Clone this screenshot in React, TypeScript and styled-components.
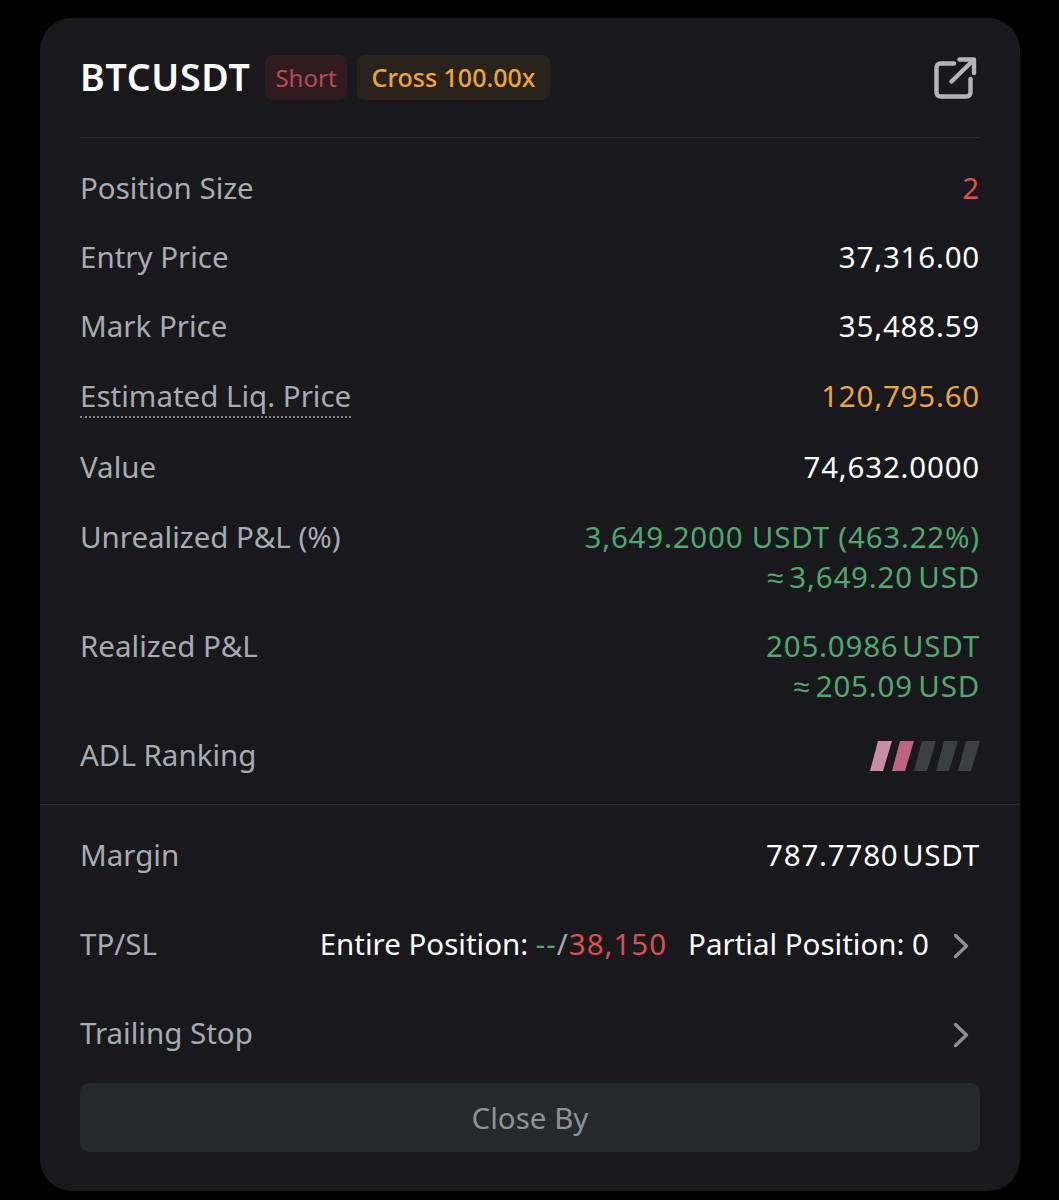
import React from "react";
import styled, { createGlobalStyle } from "styled-components";

const Global = createGlobalStyle`
  html, body { margin: 0; padding: 0; background: #000; }
  body { font-family: "Noto Sans", "Liberation Sans", sans-serif; }
`;

const Page = styled.div`
  width: 1059px;
  height: 1200px;
  padding: 18px 39px 9px 40px;
  box-sizing: border-box;
  overflow: hidden;
`;

const Card = styled.section`
  height: 1173px;
  box-sizing: border-box;
  background: #18181d;
  border-radius: 32px;
  padding: 0 40px;
`;

const Header = styled.header`
  height: 120px;
  box-sizing: border-box;
  border-bottom: 1px solid #29292e;
  padding-bottom: 1px;
  display: flex;
  align-items: center;
  gap: 10px;
`;

const Symbol = styled.h1`
  margin: 0 5px 0 0;
  font-size: 37.5px;
  font-weight: 600;
  line-height: 44px;
  letter-spacing: 0.7px;
  color: #fff;
`;

const Tag = styled.span<{ $fg: string; $bg: string; $size: number; $weight: number; $pad: number }>`
  height: 45px;
  display: inline-flex;
  align-items: center;
  padding: 0 ${(p) => p.$pad}px;
  border-radius: 8px;
  font-size: ${(p) => p.$size}px;
  font-weight: ${(p) => p.$weight};
  color: ${(p) => p.$fg};
  background: ${(p) => p.$bg};
`;

const OpenLink = styled.span`
  margin-left: auto;
  margin-right: 3px;
  margin-top: 3px;
  display: flex;
  color: #b4b5ba;
`;

const Rows = styled.div`
  display: flex;
  flex-direction: column;
  gap: 29px;
  padding-top: 30px;
  padding-bottom: 29px;
`;

const Row = styled.div<{ $nudge?: number }>`
  display: flex;
  justify-content: space-between;
  align-items: flex-start;
  margin-top: ${(p) => p.$nudge ?? 0}px;
  font-size: 29.5px;
  line-height: 40px;
`;

const Label = styled.span<{ $dotted?: boolean }>`
  color: #a9abb2;
  ${(p) =>
    p.$dotted &&
    `
    height: 40px;
    border-bottom: 2px dotted #85878d;
    margin-bottom: -2px;
  `}
`;

const Value = styled.span<{ $color?: string }>`
  color: ${(p) => p.$color ?? "#fff"};
  text-align: right;
  letter-spacing: 0.8px;
`;

const Line = styled.div<{ $tight?: number }>`
  word-spacing: ${(p) => -(p.$tight ?? 0)}px;
`;

const FullRule = styled.hr`
  margin: 0 -40px;
  border: 0;
  border-top: 1px solid #29292e;
`;

const Lower = styled.div`
  display: flex;
  flex-direction: column;
  gap: 49px;
  padding-top: 30px;
  padding-bottom: 30px;
`;

const Inline = styled.span`
  display: inline-flex;
  align-items: center;
  height: 40px;
  color: #fff;
`;

const Tone = styled.span<{ $color: string }>`
  color: ${(p) => p.$color};
  letter-spacing: 1px;
`;

const Gap = styled.span`
  display: inline-block;
  width: 21px;
`;

const Chevron = styled.span`
  display: flex;
  margin-left: 24px;
  margin-right: 11px;
  margin-top: 3px;
  color: #8e8f95;
`;

const Meter = styled.svg`
  display: block;
  margin-top: 5px;
`;

const CloseButton = styled.button`
  display: block;
  width: 100%;
  height: 69px;
  border: 0;
  border-radius: 9px;
  background: #25282d;
  color: #8f9197;
  font: inherit;
  font-size: 29.5px;
`;

const green = "#4fa96f";
const red = "#dc4f4f";
const amber = "#eea53a";

const ExternalIcon = () => (
  <svg width="44" height="44" viewBox="0 0 44 44" fill="none" stroke="currentColor" strokeWidth="4.4" strokeLinecap="round" strokeLinejoin="round">
    <path d="M21 6.5H7.5a4 4 0 0 0-4 4v25a4 4 0 0 0 4 4h26a4 4 0 0 0 4-4V22" />
    <path d="M18.5 24.5 40 3.5" />
    <path d="M26.5 2.5H41V16" />
  </svg>
);

const ChevronIcon = () => (
  <svg width="16" height="26" viewBox="0 0 16 26" fill="none" stroke="currentColor" strokeWidth="3.4" strokeLinecap="round" strokeLinejoin="round">
    <path d="M2.5 2.5 13.5 13 2.5 23.5" />
  </svg>
);

// ADL meter: five slanted bars, lit from the left.
const AdlMeter = () => (
  <Meter width="110" height="32" viewBox="0 0 110 32">
    {["#c98ea3", "#bd6480", "#3d4043", "#3d4043", "#3d4043"].map((fill, i) => (
      <polygon key={i} fill={fill} points={`${i * 22 + 8},1 ${i * 22 + 22},1 ${i * 22 + 13},31 ${i * 22},31`} />
    ))}
  </Meter>
);

export default function App() {
  return (
    <Page>
      <Global />
      <Card>
        <Header>
          <Symbol>BTCUSDT</Symbol>
          <Tag $fg="#b94a58" $bg="#301b20" $size={24} $weight={400} $pad={10}>Short</Tag>
          <Tag $fg={amber} $bg="#2a231c" $size={25} $weight={500} $pad={15}>Cross 100.00x</Tag>
          <OpenLink><ExternalIcon /></OpenLink>
        </Header>
        <Rows>
          <Row><Label>Position Size</Label><Value $color={red}>2</Value></Row>
          <Row><Label>Entry Price</Label><Value>37,316.00</Value></Row>
          <Row><Label>Mark Price</Label><Value>35,488.59</Value></Row>
          <Row $nudge={1}><Label $dotted>Estimated Liq. Price</Label><Value $color={amber}>120,795.60</Value></Row>
          <Row $nudge={2}><Label>Value</Label><Value>74,632.0000</Value></Row>
          <Row $nudge={1}>
            <Label>Unrealized P&amp;L (%)</Label>
            <Value $color={green}><Line>3,649.2000 USDT (463.22%)</Line><Line $tight={3}>≈ 3,649.20 USD</Line></Value>
          </Row>
          <Row>
            <Label>Realized P&amp;L</Label>
            <Value $color={green}><Line $tight={5}>205.0986 USDT</Line><Line $tight={3}>≈ 205.09 USD</Line></Value>
          </Row>
          <Row><Label>ADL Ranking</Label><AdlMeter /></Row>
        </Rows>
        <FullRule />
        <Lower>
          <Row><Label>Margin</Label><Value><Line $tight={5}>787.7780 USDT</Line></Value></Row>
          <Row>
            <Label>TP/SL</Label>
            <Inline>
              Entire Position:&nbsp;<Tone $color={green}>--</Tone><Tone $color="#a9abb2">/</Tone><Tone $color={red}>38,150</Tone>
              <Gap />Partial Position: 0
              <Chevron><ChevronIcon /></Chevron>
            </Inline>
          </Row>
          <Row>
            <Label>Trailing Stop</Label>
            <Inline><Chevron><ChevronIcon /></Chevron></Inline>
          </Row>
        </Lower>
        <CloseButton>Close By</CloseButton>
      </Card>
    </Page>
  );
}
